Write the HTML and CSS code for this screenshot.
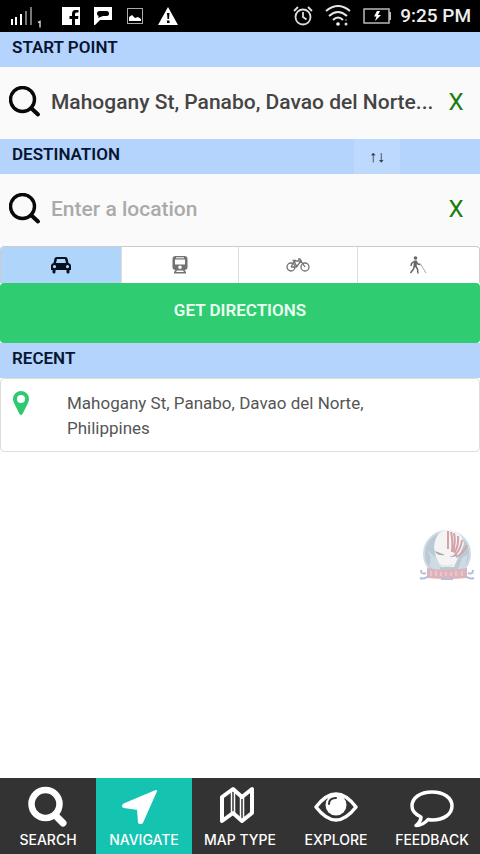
FILE: index.html
```html
<!DOCTYPE html>
<html lang="en">
<head>
<meta charset="utf-8">
<meta name="viewport" content="width=device-width, initial-scale=1">
<title>Navigate</title>
<link rel="stylesheet" href="styles.css">
</head>
<body>
<header class="status">
  <svg class="signal" viewBox="0 0 32 24" width="32" height="24" aria-hidden="true">
    <g fill="#fff"><rect x="1" y="15" width="2" height="6"/><rect x="5" y="13" width="2" height="8"/><rect x="10" y="10" width="2" height="11"/></g>
    <g fill="#777"><rect x="15" y="7" width="2" height="14"/><rect x="20" y="3" width="2" height="18"/></g>
    <path d="M28 18.500l2-1v6" fill="none" stroke="#ccc" stroke-width="1.500"/>
  </svg>
  <svg class="notice" viewBox="0 0 18 18" width="18" height="18" aria-hidden="true">
    <path fill="#fff" fill-rule="evenodd" d="M0 0h18v18h-5v-6h3l.5-3H13V7q0-1.500 1.500-1.500h2V3h-3Q10 3 10 7v2H7.500v3H10v6H0z"/>
  </svg>
  <svg class="notice" viewBox="0 0 18 18" width="18" height="18" aria-hidden="true">
    <path fill="#fff" d="M0 0h18v13H6l-5 5H0z"/><rect x="3" y="4" width="12" height="5" rx="2.500"/><path d="M5 8l-1 3 5-2z"/>
  </svg>
  <svg class="notice" viewBox="0 0 18 18" width="18" height="18" aria-hidden="true">
    <rect x="1.500" y="1.500" width="15" height="15" fill="none" stroke="#aaa"/><path fill="#fff" d="M3 14v-4l3-2 3 3 3-1 3 2v2z"/>
  </svg>
  <svg class="notice-wide" viewBox="0 0 20 18" width="20" height="18" aria-hidden="true">
    <path fill="#fff" d="M10 0l10 18H0z"/><path d="M9 6h2.500l-.5 6H9.500zM9 13.500h2.500V16H9z"/>
  </svg>
  <svg class="alarm" viewBox="0 0 20 20" width="20" height="20" aria-hidden="true">
    <g fill="none" stroke="#ddd" stroke-width="1.800"><circle cx="10" cy="11" r="7.500"/><path d="M1 5l4-4M19 5l-4-4M10 6v5l3.500 2.500"/></g>
  </svg>
  <svg class="wifi" viewBox="0 0 26 22" width="26" height="22" aria-hidden="true">
    <g fill="none" stroke="#e5e5e5" stroke-width="2"><path d="M1 6q12-10 24 0M4 11q9-8 18 0M8 15q5-5 10 0"/></g>
    <circle cx="13" cy="19" r="1.800" fill="#fff"/><circle cx="21" cy="19" r="1.500" fill="#ddd"/><circle cx="21" cy="15" r="1" fill="#666"/>
  </svg>
  <svg class="battery" viewBox="0 0 28 16" width="28" height="16" aria-hidden="true">
    <rect x="1" y="1" width="25" height="14" fill="none" stroke="#bbb" stroke-width="1.500"/><path fill="#bbb" d="M26 4h2v8h-2z"/><path fill="#fff" d="M14 3h3l-2 4h3l-6 6 1.500-4.500H11z"/>
  </svg>
  <time class="clock">9:25 PM</time>
</header>

<main class="page">
  <form class="planner">
    <div class="band"><label for="start">START POINT</label></div>
    <div class="field">
      <svg class="lens" viewBox="0 0 32 32" width="32" height="32" aria-hidden="true"><g fill="none" stroke="#080808" stroke-linecap="round"><circle cx="13.500" cy="13.500" r="12" stroke-width="3.400"/><path d="M22 22l7 6.500" stroke-width="4"/></g></svg>
      <input id="start" class="place" type="text" value="Mahogany St, Panabo, Davao del Norte...">
      <button class="clear" type="button" aria-label="Clear start point">X</button>
    </div>
    <div class="band">
      <label for="destination">DESTINATION</label>
      <button class="swap" type="button" aria-label="Swap start and destination">↑↓</button>
    </div>
    <div class="field">
      <svg class="lens" viewBox="0 0 32 32" width="32" height="32" aria-hidden="true"><g fill="none" stroke="#080808" stroke-linecap="round"><circle cx="13.500" cy="13.500" r="12" stroke-width="3.400"/><path d="M22 22l7 6.500" stroke-width="4"/></g></svg>
      <input id="destination" class="place" type="text" placeholder="Enter a location">
      <button class="clear" type="button" aria-label="Clear destination">X</button>
    </div>
    <div class="modes">
      <button class="mode active" type="button" aria-label="Car">
        <svg viewBox="0 0 20 18" width="20" height="18" aria-hidden="true"><path fill="#06101f" fill-rule="evenodd" d="M5.500 1h9q1.500 0 2 1.500L17.500 7Q20 7.500 20 10v4h-1.500v2q0 1.500-1.500 1.500T15.500 16v-2h-11v2q0 1.500-1.500 1.500T1.500 16v-2H0v-4q0-2.500 2.500-3l1-4.500Q4 1 5.500 1zM6 3L5 7h10l-1-4zM3.500 9a1.600 1.600 0 1 0 0 3.200 1.600 1.600 0 0 0 0-3.200zM16.500 9a1.600 1.600 0 1 0 0 3.200 1.600 1.600 0 0 0 0-3.200z"/></svg>
      </button>
      <button class="mode" type="button" aria-label="Train">
        <svg viewBox="0 0 16 18" width="16" height="18" aria-hidden="true"><path fill="#737373" fill-rule="evenodd" d="M3.500 0h9Q15.500 0 15.500 3v8q0 3-3 3l1.500 2v1.500H2V16l1.500-2q-3 0-3-3V3q0-3 3-3zM3 3.500V8q0 .5.500.5h9q.5 0 .5-.5V3.500zM8 9.500a1.800 1.800 0 1 0 0 3.600 1.800 1.800 0 0 0 0-3.600zM5 14.500L4 16h8l-1-1.500z"/><path stroke="#fff" d="M4 1.800h8"/></svg>
      </button>
      <button class="mode" type="button" aria-label="Bicycle">
        <svg viewBox="0 0 24 14" width="24" height="14" aria-hidden="true"><g fill="none" stroke="#737373" stroke-width="1.300"><circle cx="5" cy="9" r="4"/><circle cx="19" cy="9" r="4"/><path d="M5 9l3.500-6H15l-4.500 6H5M8 3l3 6M15 3l4 6M15 3l-1-2h-2M6.500 2.500H10"/></g></svg>
      </button>
      <button class="mode" type="button" aria-label="Walking">
        <svg viewBox="0 0 18 18" width="18" height="18" aria-hidden="true"><circle cx="6.500" cy="2" r="1.800" fill="#666"/><g fill="none" stroke="#666"><path d="M6.500 4.500L6 11" stroke-width="3.200"/><path d="M5.500 10l-1 3L1.500 17M6.500 10l2 3 .5 4.500M5 5.500L2.500 7.500 2 10M7 5.500L9 8l2.500.5" stroke-width="1.500"/><path d="M11.500 8L17 17" stroke="#aaa"/></g></svg>
      </button>
    </div>
    <button class="go" type="submit">GET DIRECTIONS</button>
  </form>

  <section class="recent">
    <h2 class="band">RECENT</h2>
    <a class="card" href="#recent-place">
      <svg class="pin" viewBox="0 0 16 24" width="16" height="24" aria-hidden="true"><path fill="#2fca70" fill-rule="evenodd" d="M8 0a8 8 0 0 1 8 8q0 2-1 4L9.500 23q-1.500 2-3 0L1 12Q0 10 0 8a8 8 0 0 1 8-8zm0 4a4 4 0 1 0 0 8 4 4 0 0 0 0-8z"/></svg>
      <span class="address">Mahogany St, Panabo, Davao del Norte, Philippines</span>
    </a>
  </section>
</main>

<svg class="badge" viewBox="0 0 56 54" width="56" height="54" aria-hidden="true">
  <circle cx="28" cy="26" r="23" fill="#a9bdcb" stroke="#c3d3de" stroke-width="2"/>
  <path fill="#c2d2dc" d="M8 22q6 7 2 16l10 8 2-12zM43 30l6-4-3 14-8 4z"/>
  <path fill="#f3f1f2" d="M15 19Q17 1 30 2q13 1 15 14l-6 14-4 9H22l-5-10z"/>
  <g fill="none" stroke="#c88d94" stroke-width="2"><path d="M29 3v18M32 4q2 8 1 20M35 5q2 8-1 19M39 8q1 10-4 17M43 12q-1 9-7 15M48 17q-3 8-11 12"/></g>
  <path fill="#8f929c" d="M16 23l10 4q-6 1-9-2zM38 26l-8 3q5 0 7-1z"/>
  <path fill="none" stroke="#d5d0d6" d="M21 37q7 3 13 0"/>
  <path fill="#d9a0ab" d="M8 40q20 4 40 0v10q-20 2-40 0z"/>
  <path fill="none" stroke="#e3b8c1" stroke-width="2" d="M12 43v5M17 43v5M22 44v4M27 44v4M32 44v4M37 43v5M43 43v5"/>
  <path fill="none" stroke="#a2afd0" stroke-width="2" d="M2 42q0 5 5 3M1 50q5 2 9-3M54 42q0 5-5 3M55 50q-5 2-9-3M22 51h12"/>
</svg>

<nav class="tabs" aria-label="Main">
  <a class="tab" href="#search">
    <svg viewBox="0 0 44 44" width="44" height="44" aria-hidden="true"><g fill="none" stroke="#fff" stroke-linecap="round"><circle cx="19.500" cy="18" r="14" stroke-width="6.500"/><path d="M30 30l7 7" stroke-width="7"/></g></svg>
    <span>SEARCH</span>
  </a>
  <a class="tab current" href="#navigate" aria-current="page">
    <svg viewBox="0 0 44 44" width="44" height="44" aria-hidden="true"><path fill="#fff" stroke="#fff" stroke-width="2" stroke-linejoin="round" d="M34 5L20 36.500q-1 1-3 0l-1-13.500-14-2q-2-1 0-2.500z"/></svg>
    <span>NAVIGATE</span>
  </a>
  <a class="tab" href="#map-type">
    <svg viewBox="0 0 44 44" width="44" height="44" aria-hidden="true"><g fill="none" stroke="#fff" stroke-linejoin="round"><path stroke-width="4" d="M4 11l11-8 9 8 10-8v24l-10 8-9-8-11 8z"/><path stroke-width="1.500" d="M13.500 5v22M16.500 5v22M22.500 10v24M25.500 10v24"/></g></svg>
    <span>MAP TYPE</span>
  </a>
  <a class="tab" href="#explore">
    <svg viewBox="0 0 44 44" width="44" height="44" aria-hidden="true"><path fill="none" stroke="#fff" stroke-width="3.500" stroke-linejoin="round" d="M2 21Q12 8 22 8t20 13Q32 34 22 34T2 21z"/><circle cx="22" cy="19" r="10.500" fill="#fff"/><path fill="none" stroke="#333" stroke-width="2" stroke-linecap="round" d="M15 18q0-6 7-6"/></svg>
    <span>EXPLORE</span>
  </a>
  <a class="tab" href="#feedback">
    <svg viewBox="0 0 44 44" width="44" height="44" aria-hidden="true"><path fill="none" stroke="#fff" stroke-width="3.500" stroke-linejoin="round" d="M22 6C34 6 42 12 42 20s-8 14-20 14q-2 0-4-.5-5 6-12 6 5-4 5-8.500Q2 27 2 20C2 12 10 6 22 6z"/></svg>
    <span>FEEDBACK</span>
  </a>
</nav>
</body>
</html>
```
FILE: styles.css
```css
* { box-sizing: border-box; }
body {
  margin: 0;
  min-height: 100vh;
  display: flex;
  flex-direction: column;
  background: #fff;
  font-family: Roboto, "Liberation Sans", sans-serif;
  color: #444;
}
button, input { font: inherit; color: inherit; margin: 0; padding: 0; border: 0; background: none; }
a { color: inherit; text-decoration: none; }

.status {
  display: flex;
  align-items: center;
  height: 32px;
  padding: 0 9px 0 10px;
  background: #000;
  color: #eee;
}
.signal { margin-right: 20px; }
.notice { margin-right: 14px; }
.alarm { margin-left: auto; }
.wifi { margin-left: 12px; }
.battery { margin-left: 12px; }
.clock { margin-left: 9px; font-size: 19px; font-weight: 500; line-height: 32px; }

.page { flex: 1; }
.band {
  display: flex;
  height: 35px;
  margin: 0;
  padding: 0 12px;
  background: #b4d3fd;
  color: #071530;
  font-size: 17px;
  font-weight: 600;
  line-height: 31px;
}
.field {
  display: flex;
  align-items: center;
  height: 72px;
  padding: 0 9px 2px;
  background: #fafafa;
}
.lens { flex: none; }
.place {
  flex: 1;
  min-width: 0;
  height: 48px;
  padding-left: 10px;
  font-size: 21px;
  font-weight: 500;
  text-overflow: ellipsis;
}
.place::placeholder { color: #aaa; opacity: 1; }
.clear {
  width: 30px;
  height: 48px;
  color: #187d0b;
  font-size: 24px;
}
.swap {
  width: 46px;
  height: 35px;
  margin-left: auto;
  margin-right: 68px;
  background: #bdd9fe;
  color: #222;
  font-family: "Liberation Sans", sans-serif;
  font-size: 16px;
}
.modes {
  display: grid;
  grid-template-columns: 121fr 117fr 119fr 123fr;
  height: 37px;
  border: 1px solid #ccc;
  border-bottom: 0;
  border-radius: 4px 4px 0 0;
  overflow: hidden;
}
.mode {
  display: flex;
  align-items: center;
  justify-content: center;
}
.mode + .mode { border-left: 1px solid #ddd; }
.active { background: #b0d5fb; }
.go {
  display: block;
  width: 100%;
  height: 60px;
  padding-bottom: 6px;
  border-radius: 4px;
  background: #2fcc71;
  color: #eafff2;
  font-size: 17px;
  font-weight: 600;
}
.card {
  display: flex;
  align-items: flex-start;
  padding: 12px 12px 10px;
  border: 1px solid #ddd;
  border-radius: 4px;
  font-size: 17px;
  line-height: 25px;
  color: #555;
}
.pin { flex: none; }
.address { max-width: 360px; padding-left: 38px; }

.badge { position: fixed; right: 5px; bottom: 272px; opacity: .8; }

.tabs {
  display: grid;
  grid-template-columns: repeat(5, 1fr);
  height: 76px;
  background: #333;
  color: #fff;
}
.tab {
  display: flex;
  flex-direction: column;
  align-items: center;
  padding-top: 8px;
  font-family: Inter, sans-serif;
  font-size: 14px;
  font-weight: 500;
  line-height: 20px;
  white-space: nowrap;
}
.current { background: #14c4b1; }
```
